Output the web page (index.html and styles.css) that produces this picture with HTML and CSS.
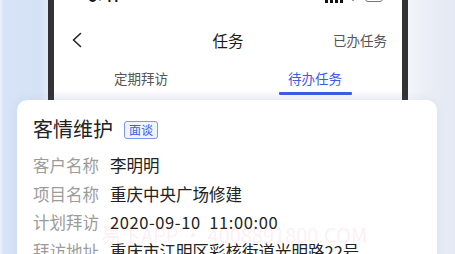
FILE: index.html
```html
<!DOCTYPE html>
<html lang="zh">
<head>
<meta charset="utf-8">
<link rel="stylesheet" href="styles.css">
</head>
<body>
<div class="stage">
  <div class="phone">
    <div class="status">
      <span class="time">9:41</span>
      <span class="sicons">
        <svg width="60" height="12" viewBox="0 0 60 12">
          <rect x="0" y="7" width="3" height="5" fill="#111"/>
          <rect x="5" y="5" width="3" height="7" fill="#111"/>
          <rect x="10" y="3" width="3" height="9" fill="#111"/>
          <rect x="15" y="0" width="3" height="12" fill="#111"/>
          <path d="M23 4 Q28 0 33 4 L28 10 Z" fill="#111"/>
          <rect x="40.5" y="0.5" width="17" height="10" rx="2.5" fill="none" stroke="#777"/>
          <rect x="42" y="2" width="14" height="7" rx="1.5" fill="#111"/>
        </svg>
      </span>
    </div>
    <div class="nav">
      <svg class="back" width="12" height="16" viewBox="0 0 12 16">
        <path d="M9.5 1.5 L2.5 8 L9.5 14.5" fill="none" stroke="#222" stroke-width="1.6" stroke-linecap="round" stroke-linejoin="round"/>
      </svg>
      <span class="title">任务</span>
      <span class="done">已办任务</span>
    </div>
    <div class="tabs">
      <div class="tab">定期拜访</div>
      <div class="tab active">待办任务</div>
    </div>
    <div class="screen-rest"></div>
  </div>
</div>
<div class="card">
  <div class="card-head">
    <span class="card-title">客情维护</span>
    <span class="tag">面谈</span>
  </div>
  <div class="row"><span class="label">客户名称</span><span class="value">李明明</span></div>
  <div class="row"><span class="label">项目名称</span><span class="value">重庆中央广场修建</span></div>
  <div class="row"><span class="label">计划拜访</span><span class="value num">2020-09-10&nbsp;&nbsp;11:00:00</span></div>
  <div class="row"><span class="label">拜访地址</span><span class="value">重庆市江明区彩核街道光明路22号</span></div>
  <div class="watermark">易卞APP • 4008891800.COM</div>
</div>
</body>
</html>
```
FILE: styles.css
```css
html, body {
  margin: 0;
  padding: 0;
}
body {
  width: 455px;
  height: 254px;
  overflow: hidden;
  position: relative;
  font-family: "Noto Sans CJK SC", "Noto Sans", sans-serif;
  background: linear-gradient(90deg, #eef3fb 0, #d7e3f6 4px, #d5e2f6 40px, #e2eaf8 48px, #f3f5fa 408px, #e9edf6 430px, #e4e9f3 455px);
}
.stage {
  display: flex;
  padding-left: 48px;
}
.phone {
  width: 348px;
  height: 300px;
  border-left: 6px solid #333;
  border-right: 6px solid #333;
  background: #fff;
  display: flex;
  flex-direction: column;
  margin-top: -12px;
}
.status {
  height: 32px;
  display: flex;
  justify-content: space-between;
  align-items: flex-start;
  padding: 0 17px 0 34px;
  line-height: 18px;
}
.time {
  font-family: "Inter", "Liberation Sans", sans-serif;
  font-weight: 600;
  font-size: 15px;
  color: #111;
}
.sicons svg {
  display: block;
  margin-top: 3px;
}
.nav {
  height: 40px;
  display: flex;
  align-items: center;
  justify-content: space-between;
  padding: 0 15px 0 17px;
  position: relative;
}
.back {
  display: block;
}
.title {
  position: absolute;
  left: 0;
  right: 0;
  text-align: center;
  font-size: 15.5px;
  color: #1a1a1a;
  pointer-events: none;
}
.done {
  font-size: 13.5px;
  color: #555;
}
.tabs {
  height: 38px;
  display: flex;
  background: linear-gradient(180deg, #fff 0, #fff 30px, #f3f4f8 38px);
}
.tab {
  flex: 1;
  display: flex;
  justify-content: center;
  align-items: center;
  font-size: 13.5px;
  color: #555;
  position: relative;
  padding-bottom: 2px;
}
.tab.active {
  color: #3b5de3;
}
.tab.active::after {
  content: "";
  position: absolute;
  bottom: 3px;
  left: 50%;
  width: 73px;
  margin-left: -36px;
  height: 3px;
  background: #3b5de3;
  border-radius: 1px;
}
.screen-rest {
  flex: 1;
  background: #f3f4f8;
}
.card {
  position: absolute;
  left: 17px;
  top: 100px;
  width: 420px;
  height: 200px;
  box-sizing: border-box;
  padding: 14px 16px;
  background: #fff;
  border-radius: 10px;
  box-shadow: 0 0 10px rgba(120, 140, 180, 0.12);
}
.card-head {
  display: flex;
  align-items: center;
  height: 30px;
  gap: 11px;
  margin-bottom: 7px;
}
.card-title {
  font-size: 20px;
  color: #222;
  line-height: 30px;
}
.tag {
  font-size: 12px;
  line-height: 16px;
  color: #3b5de3;
  background: #f0f4ff;
  border: 1px solid #7d95ee;
  border-radius: 3px;
  padding: 0 4px;
  margin-top: 1px;
}
.row {
  display: flex;
  height: 28.5px;
  align-items: center;
  font-size: 16.5px;
  gap: 11px;
  white-space: nowrap;
}
.label {
  color: #9c9c9c;
}
.value {
  color: #222;
}
.value.num {
  letter-spacing: 0.6px;
}
.watermark {
  position: absolute;
  left: 84px;
  top: 120px;
  font-family: "Noto Sans CJK SC", "Noto Sans", sans-serif;
  font-size: 20px;
  color: rgba(245, 120, 160, 0.13);
  white-space: nowrap;
}
```
